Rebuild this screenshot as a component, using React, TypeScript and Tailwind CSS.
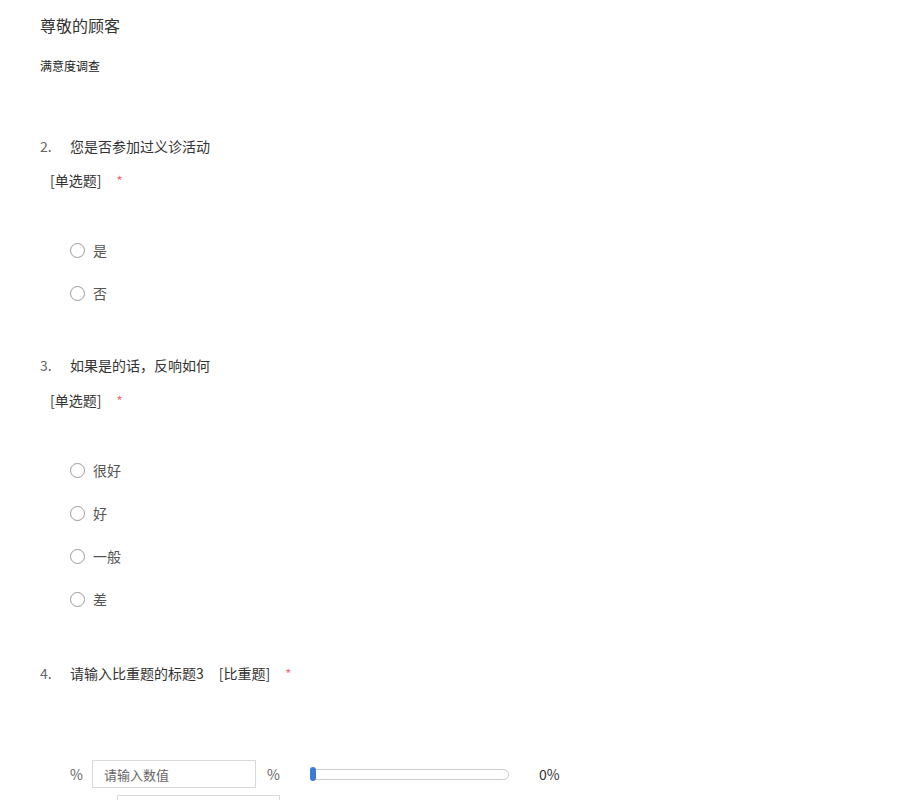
import React from 'react';

const font = { fontFamily: '"Noto Sans CJK SC", "Open Sans", sans-serif' };

const Radio: React.FC<{ label: string }> = ({ label }) => (
  <label className="flex items-center h-[43px] pl-[70px] text-[14px] text-[#555]">
    <span className="w-[15px] h-[15px] rounded-full border border-[#999] bg-white shrink-0" />
    <span className="ml-[8px]">{label}</span>
  </label>
);

const Star = () => <span className="text-[#f56c6c] text-[13px]">*</span>;

const Question: React.FC<{ no: string; title: string }> = ({ no, title }) => (
  <div className="flex items-center h-[20px] text-[14px] text-[#333]">
    <span className="w-[30px] text-[#666]">{no}</span>
    <span>{title}</span>
  </div>
);

const TypeTag = () => (
  <div className="h-[20px] flex items-center pl-[10px] text-[14px] text-[#333]">
    <span>[单选题]</span>
    <span className="ml-[15px]"><Star /></span>
  </div>
);

export default function App() {
  return (
    <div className="min-h-[800px] bg-white px-[40px] pt-[14px]" style={font}>
      <h1 className="text-[16px] leading-[22px] text-[#333]">尊敬的顾客</h1>
      <p className="mt-[22px] text-[12px] leading-[16px] font-normal text-[#222]">满意度调查</p>

      <div className="mt-[62px]">
        <Question no="2." title="您是否参加过义诊活动" />
        <div className="mt-[14px]">
          <TypeTag />
        </div>
        <div className="mt-[39px] -ml-[40px]">
          <Radio label="是" />
          <Radio label="否" />
        </div>
      </div>

      <div className="mt-[40px]">
        <Question no="3." title="如果是的话，反响如何" />
        <div className="mt-[15px]">
          <TypeTag />
        </div>
        <div className="mt-[39px] -ml-[40px]">
          <Radio label="很好" />
          <Radio label="好" />
          <Radio label="一般" />
          <Radio label="差" />
        </div>
      </div>

      <div className="mt-[42px]">
        <div className="flex items-center h-[20px] text-[14px] text-[#333]">
          <span className="w-[30px] text-[#666]">4.</span>
          <span>请输入比重题的标题3</span>
          <span className="ml-[15px]">[比重题]</span>
          <span className="ml-[15px]"><Star /></span>
        </div>

        <div className="mt-[77px] flex items-center pl-[30px] text-[14px] text-[#666]">
          <span className="w-[22px]">%</span>
          <input
            readOnly
            placeholder="请输入数值"
            className="w-[164px] h-[28px] border border-[#d9d9d9] px-[11px] text-[13px] placeholder:text-[#666] outline-none"
            style={font}
          />
          <span className="ml-[11px]">%</span>
          <div className="ml-[30px] relative w-[199px] h-[11px] rounded-full border border-[#ccc]">
            <span className="absolute -left-px -top-[3px] w-[6px] h-[14px] rounded-full bg-[#3a7bd5]" />
          </div>
          <span className="ml-[30px] text-[#333]">0%</span>
        </div>
        <div className="mt-[7px] ml-[77px] w-[163px] h-[28px] border border-[#d9d9d9]" />
      </div>
    </div>
  );
}
